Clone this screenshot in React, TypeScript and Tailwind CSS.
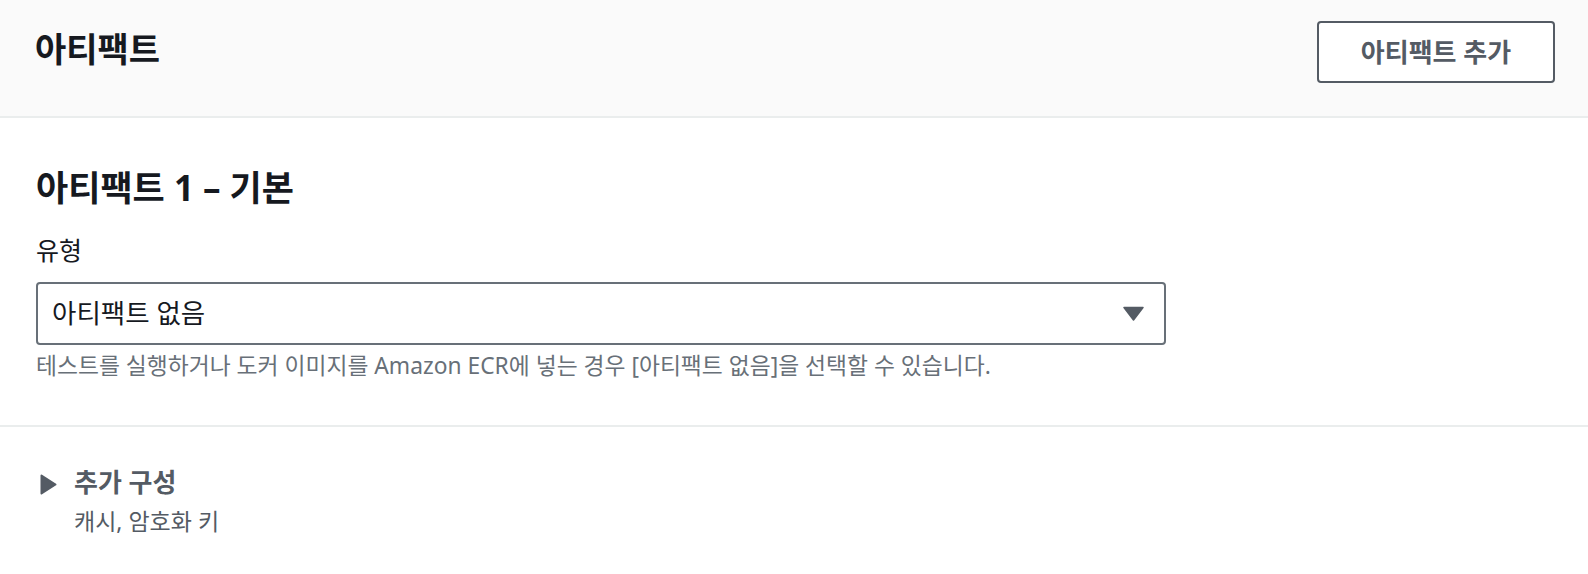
import React, { FC, ReactElement } from 'react';

const font = { fontFamily: '"Noto Sans", "Noto Sans CJK KR", sans-serif' };

const App: FC = (): ReactElement => {
	return (
		<div className="w-[1588px] h-[574px] bg-white text-[#16191f]" style={font}>
			{/* header */}
			<header className="h-[118px] bg-[#fafafa] border-b-2 border-[#eaeded] flex items-start justify-between pl-[35px] pr-[33px] pt-[21px]">
				<h2 className="h-[56px] flex items-center text-[34px] font-bold leading-none">아티팩트</h2>
				<button className="w-[238px] h-[62px] border-2 border-[#545b64] rounded-[4px] bg-white text-[#545b64] text-[26px] font-bold leading-none">
					아티팩트 추가
				</button>
			</header>

			{/* artifact 1 */}
			<section className="pl-[36px] pr-[32px] pt-[52px] pb-[47px] border-b-2 border-[#eaeded]">
				<h3 className="text-[35px] font-bold leading-none">아티팩트 1 – 기본</h3>
				<label className="block mt-[33px] text-[25px] leading-none">유형</label>
				<div className="mt-[19px] w-[1130px] h-[63px] border-2 border-[#687078] rounded-[4px] flex items-center justify-between pl-[14px] pr-[20px]">
					<span className="text-[26.5px] leading-none">아티팩트 없음</span>
					<svg width="21" height="15" viewBox="0 0 21 15">
						<path d="M1 1.5 L20 1.5 L10.5 14 Z" fill="#545b64" stroke="#545b64" strokeWidth="1.5" strokeLinejoin="round" />
					</svg>
				</div>
				<p className="mt-[10px] text-[22.8px] text-[#687078] leading-none">
					테스트를 실행하거나 도커 이미지를 Amazon ECR에 넣는 경우 [아티팩트 없음]을 선택할 수 있습니다.
				</p>
			</section>

			{/* additional config */}
			<section className="pl-[40px] pt-[42px] flex gap-[17px]">
				<svg width="17" height="21" viewBox="0 0 17 21" className="mt-[5px] shrink-0">
					<path d="M1.5 1.5 L15.5 10.5 L1.5 19.5 Z" fill="#545b64" stroke="#545b64" strokeWidth="2" strokeLinejoin="round" />
				</svg>
				<div>
					<div className="text-[26px] font-bold text-[#545b64] leading-none">추가 구성</div>
					<div className="mt-[15px] text-[23px] text-[#545b64] leading-none">캐시, 암호화 키</div>
				</div>
			</section>
		</div>
	);
};
export default App;
